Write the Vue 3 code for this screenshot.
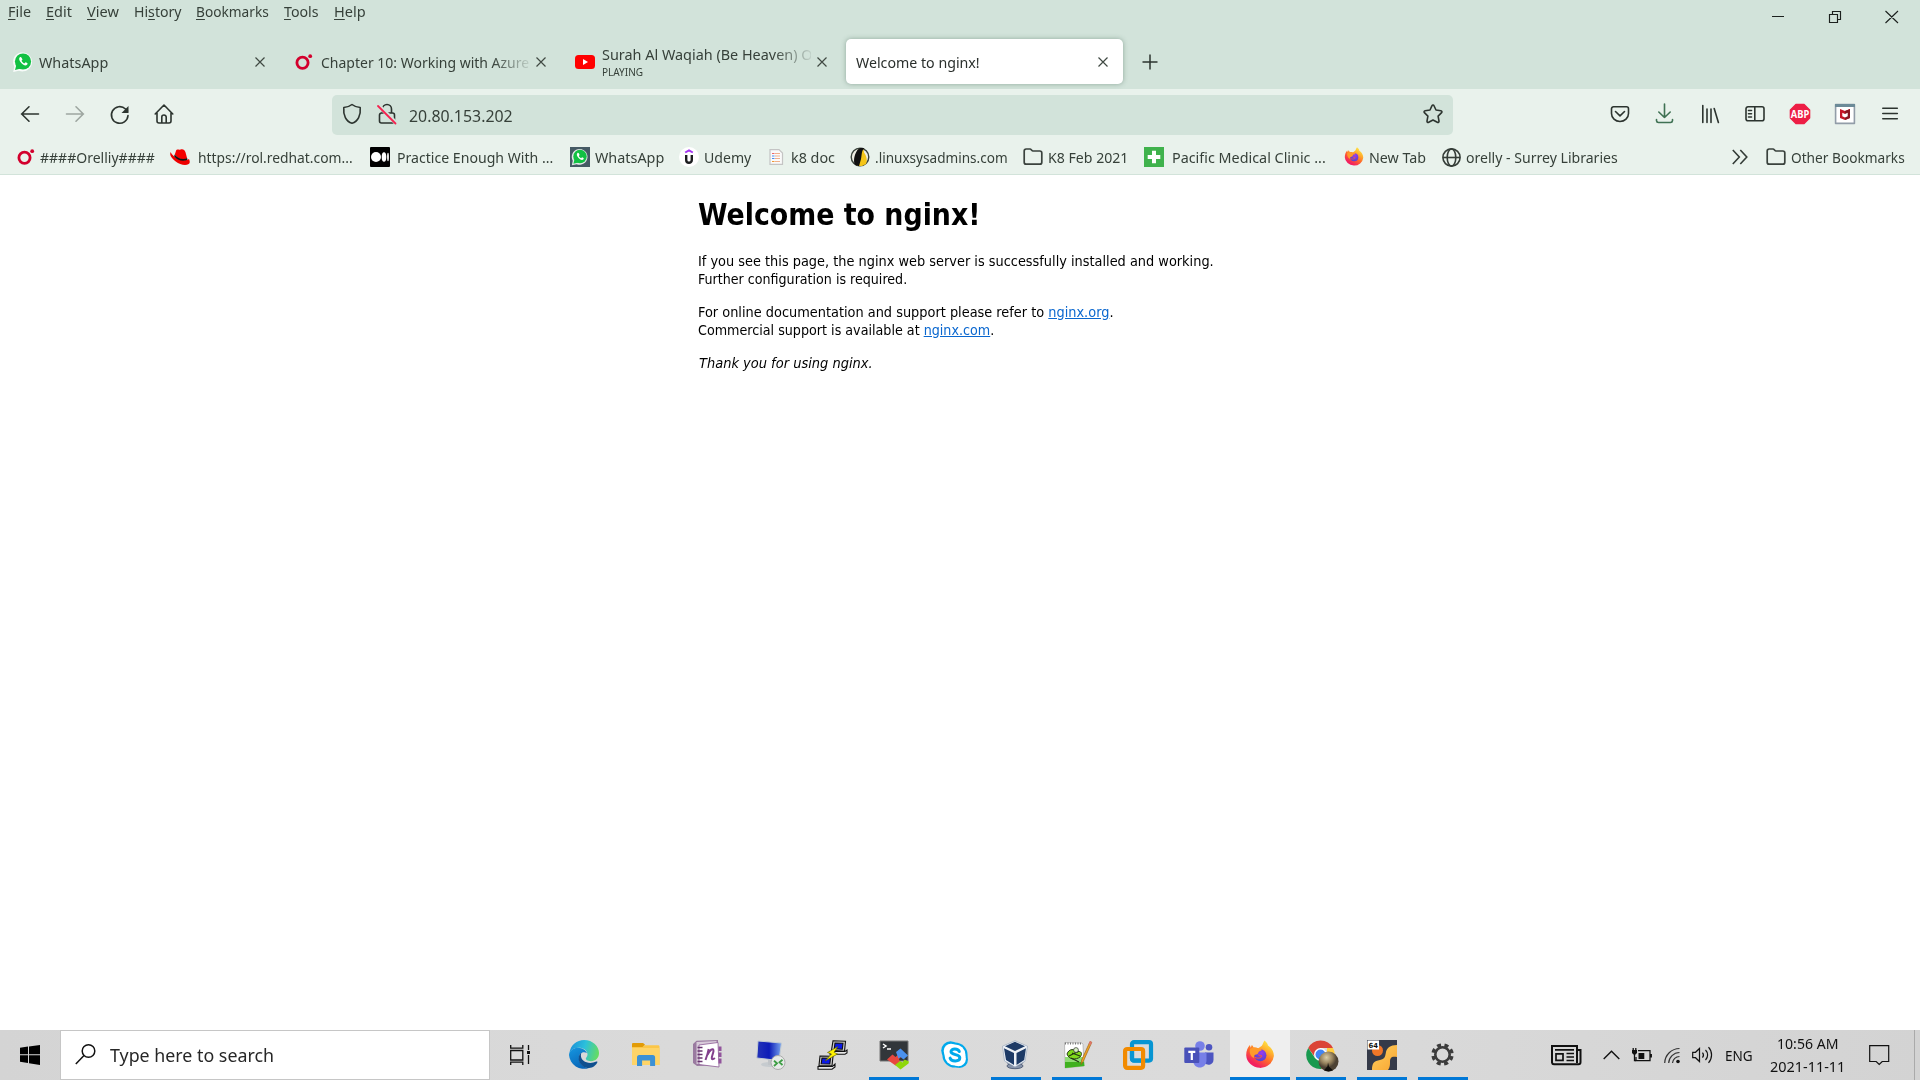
<script setup>
const fit = (el, { value }) => {
  const natural = el.offsetWidth
  if (!natural || !value) return
  el.style.transform = `scaleX(${value / natural})`
  el.style.marginRight = `${value - natural}px`
}
const vFit = { mounted: fit }

const orly = '<circle cx="8.5" cy="10.800" r="5.600" fill="none" stroke="#d3002d" stroke-width="2.800"/><circle cx="16.2" cy="4.2" r="1.9" fill="#d3002d"/>'
const wa = '<path d="M.2 20 1.300 14.600A9.500 9.500 0 1 1 6 18.700Z" fill="#fff" opacity=".85"/><circle cx="10" cy="9.500" r="8.100" fill="#12c143"/><path d="M2 18 3.500 12.500l4.500 4Z" fill="#12c143"/><path d="M7 5.100c-1.600 1.400-.8 3.600 1.300 6 2.200 2.300 4.500 3.200 5.900 1.500.8-1 .4-1.400-1.700-2.300l-1.200 1.200c-1.200-.5-2.300-1.600-2.800-2.700l1-1.200c-.8-1.900-1.300-2.900-2.500-2.500Z" fill="#fff"/>'
const folder = '<path d="M1.200 4a2 2 0 0 1 2-2h3.800c1.300 0 1.700 2 3 2h6.800a2 2 0 0 1 2 2v9.200a2 2 0 0 1-2 2H3.200a2 2 0 0 1-2-2Z" fill="none" stroke="#3a423d" stroke-width="1.700"/>'
const fox = '<defs><linearGradient id="fg" x1=".85" y1="0" x2=".2" y2="1"><stop offset="0" stop-color="#fff44f"/><stop offset=".3" stop-color="#ffb22e"/><stop offset=".55" stop-color="#ff6a2b"/><stop offset=".85" stop-color="#f2205f"/></linearGradient><radialGradient id="fp" cx=".6" cy=".3" r=".8"><stop offset="0" stop-color="#9a3af0"/><stop offset="1" stop-color="#4a45cc"/></radialGradient></defs><path d="M19.500 .5c2.500 1.900 3.300 3.600 3.500 5 3.600 2.200 5.900 6.300 5.900 10.500A13.900 13.300 0 0 1 1.200 15.300c0-4.500 1.500-8 3.700-10.200l.8 2.700 1.100-2.800c.9.600 1.400 1.500 1.700 2.500 1.900-.2 3.300 0 4.800.7 2.300-1.500 3-1.800 4-3.200.7-1.400 1-2.700 2.200-4.500Z" fill="url(#fg)"/><circle cx="15.400" cy="15.200" r="6" fill="url(#fp)"/><path d="M5 8.800c3-2 6-1.500 8.500-.2 2 .2 3 .6 3.300 1.500-.5 1-2.500 1-3 1.700-.7 1-.4 2.300-2.500 2.700-2 .3-2.800 1.200-2.100 3.500-3.500-1-5.200-5-4.200-9.200Z" fill="#ff9a2a"/><path d="M10 17.300c3 1.800 6.200.5 7-1.200-1.500-.2-2.800-.8-3.800-1.500" fill="none" stroke="#ff5a36" stroke-width="1"/>'
const foxSmall = fox.replaceAll('fg', 'fgs').replaceAll('fp', 'fps')

const menus = [
  ['', 'F', 'ile', 23], ['', 'E', 'dit', 26], ['', 'V', 'iew', 32], ['Hi', 's', 'tory', 48],
  ['', 'B', 'ookmarks', 73], ['', 'T', 'ools', 35], ['', 'H', 'elp', 32],
]

const bookmarks = [
  { w: 154, s: 24, t: '####Orelliy####', tw: 115, i: orly },
  { w: 200, s: 28, t: 'https://rol.redhat.com...', tw: 155, i: '<path d="M.5 5C2 8 5 11 10 12.500c4 1 7 .9 9-.5 1 2.500 1.200 4-.3 5-3.500 2-9 .4-13-2.500C2.500 12.200 0 9 .2 6.800Z" fill="#e00"/><path d="M4.800 7.500 6.200 3.200C7 1.800 9 3.300 10.500 2.600c2-.9 4.200 0 5 2.600l1.600 6c-4 2.500-10 .2-12.300-3.700Z" fill="#f40000"/><path d="M4.700 7.600c2.500 3.700 8.500 5.800 12.400 3.500l.4 1.600c-4.500 2.500-11 0-13.400-3.500Z" fill="#111"/>' },
  { w: 200, s: 27, t: 'Practice Enough With ...', tw: 156, i: '<rect width="20" height="20" rx="1"/><circle cx="6" cy="10" r="5" fill="#fff"/><ellipse cx="14" cy="10" rx="2.300" ry="4.700" fill="#fff"/><ellipse cx="18" cy="10" rx=".9" ry="4.200" fill="#fff"/>' },
  { w: 109, s: 25, t: 'WhatsApp', tw: 69, i: `<rect width="20" height="20" fill="#455a64"/><g transform="translate(1.700 1.700) scale(.83)">${wa}</g>` },
  { w: 87, s: 25, t: 'Udemy', tw: 47, i: '<circle cx="10" cy="10" r="10" fill="#fff"/><path d="m6.200 5.500 3.800-2.200 3.800 2.200" fill="none" stroke="#a435f0" stroke-width="2"/><path d="M7.200 8v5c0 3.700 5.600 3.700 5.600 0V8" fill="none" stroke="#1c1d1f" stroke-width="2.400"/>' },
  { w: 84, s: 25, t: 'k8 doc', tw: 44, i: '<path d="M4 2.600h9l3.500 3.500v11.300H4Z" fill="#fafafa" stroke="#c4c4c4" stroke-width="1.200"/><path d="M6 6.500h2.500" stroke="#e66"/><path d="M6 9h2.500M6 11.500h2.500" stroke="#4b8df0"/><path d="M6 14.500h2.500" stroke="#e93"/><path d="M9 6.500h5M9 9h5M9 11.500h5M9 14.500h5" stroke="#f0b08c"/>' },
  { w: 173, s: 25, t: '.linuxsysadmins.com', tw: 133, i: '<circle cx="10" cy="10" r="8.800" fill="#eeeee4" stroke="#38413a" stroke-width="1.400"/><path d="M8.500 2.500c4-2 5.500-.5 5.500 3 3 4 3.500 8.500 2 11.500l-4 2H7.500C4.500 15 6 7 8.500 2.500Z" fill="#f5c518"/><path d="M6.500 4.500C8 .8 12.500-.3 14.500 1.500 11.500 3 12 7 11 12L9 19.300 5 18C3 14 4.500 8 6.500 4.500Z" fill="#111"/>' },
  { w: 121, s: 25, t: 'K8 Feb 2021', tw: 80, i: folder },
  { w: 200, s: 28, t: 'Pacific Medical Clinic ...', tw: 154, i: '<rect width="20" height="20" fill="#3fb24c"/><path d="M10 3.700v12.600M3.700 10h12.600" stroke="#fff" stroke-width="4"/>' },
  { w: 98, s: 25, t: 'New Tab', tw: 57, i: `<g transform="scale(.667)">${foxSmall}</g>` },
  { w: 290, s: 24, t: 'orelly - Surrey Libraries', tw: 152, i: '<g fill="none" stroke="#353d38" stroke-width="1.600"><circle cx="9.500" cy="10.500" r="8.600"/><ellipse cx="9.500" cy="10.500" rx="4.300" ry="8.600"/><path d="M1 10.500h17"/></g>' },
]

const apps = [
  { w: 62, i: '<defs><linearGradient id="e1" x1="0" y1=".3" x2="1" y2=".5"><stop offset="0" stop-color="#1c91d8"/><stop offset=".5" stop-color="#2bc0dc"/><stop offset="1" stop-color="#65dc62"/></linearGradient><linearGradient id="e2" x1="0" y1="0" x2=".5" y2="1"><stop offset="0" stop-color="#1697e0"/><stop offset="1" stop-color="#0966b8"/></linearGradient></defs><path d="M.4 13C1.500 5 8 0 15 0c9 0 15 6.500 15 13 0 5-3.500 8.200-8 8.200-4 0-5.300-1.600-5.200-2.600 0-.8 1.700-1.600 1.700-4C18.500 10 13.500 7.500 9 7.800 4.500 8 2 10 .4 13Z" fill="url(#e1)"/><path d="M.2 13.500C1.600 10 5 7.700 9 7.800c4.500.2 8.200 2.700 8.900 5.300-3.800-2.300-8.200.3-8 5.200.2 5 4.400 9.500 10 9.700A15 15 0 0 1 0 15Z" fill="url(#e2)"/><path d="M12.500 12.500C6.500 17 10.500 28 20 28c4 0 7-3 8.300-5.500.4-.8-.2-1.200-.9-.9-8 3.600-15.500-.5-15.500-6.100 0-1.200.2-2.200.6-3Z" fill="#10508f"/>' },
  { w: 62, i: '<path d="M1 4.500C1 3.500 1.500 3 2.500 3h8l2 2.200H27c1 0 1.500.5 1.500 1.500V25H1Z" fill="#fbc648"/><path d="M1 4.500C1 3.500 1.500 3 2.500 3h9.500l2 1.500L11.500 7H1Z" fill="#e29b07"/><path d="M1 8h27.500v17H1Z" fill="#fed468"/><path d="M6 26V17.500c0-1.500.8-2.500 2.300-2.500h13.500c1.500 0 2.300 1 2.300 2.500V26h-5v-5.500h-8V26Z" fill="#3c91d5"/>' },
  { w: 63, i: '<path d="M0 4 3.500 .8 25 0v25L4 26 0 23Z" fill="#9a7aa0"/><path d="m3.500 2 20-1v21l-20 2Z" fill="#d8cbd9"/><path d="m6 5 19-2.500 1 24.500L6 24.500Z" fill="#fff" stroke="#8c5a94" stroke-width=".8"/><path d="M25.500 6.500h3v4.500h-3zm0 6h3v4.500h-3zm0 6h3v5h-3z" fill="#92549c"/><path d="M4.500 7.500h5M4.500 11h5M4.500 14.500h5M4.500 18h5M4.500 21.500h5" stroke="#68356f" stroke-width="1.500"/><path d="M12.500 20c1.500-4 2.500-7 3.200-11M14.500 15c2-5 6-8 6-4 0 2-2 5-1.700 7.500.2 1.500 2 .5 3-.6" fill="none" stroke="#83408d" stroke-width="2"/>' },
  { w: 61, i: '<defs><linearGradient id="r"><stop offset="0" stop-color="#2433b8"/><stop offset=".5" stop-color="#0d1cb8"/><stop offset="1" stop-color="#78a4ef"/></linearGradient></defs><ellipse cx="14" cy="24.500" rx="9" ry="2.500" fill="#c6cbcf"/><path d="m12 19 7 1v5h-7Z" fill="#c0c4c8"/><path d="m2 1 23.500 2-2.500 17.500L.8 18Z" fill="url(#r)" stroke="#c3ccd4" stroke-width="1"/><circle cx="22" cy="22.500" r="7" fill="#e7eae8" stroke="#aaa"/><path d="m18 20.800 3 2.500-3 2.700M26.500 19.800l-3 2.500 3 2.700" fill="none" stroke="#3c9d43" stroke-width="1.800"/>' },
  { w: 62, i: '<g stroke="#111" stroke-width="1.100"><path d="m16 .8 12.500.5-1 10-13-1Z" fill="#ccc"/><path d="m18 3 8 .2-.7 6-8-.4Z" fill="#0b19e8"/><path d="M13 11.500h15l2-1.500v3l-2 1.200H13Z" fill="#e8e8e8"/><path d="m3 16 13 .2-1 9.500L2 25.500Z" fill="#ccc"/><path d="m5 18 8.500.2-.7 5.800-8.600-.2Z" fill="#0b19e8"/><path d="M1 26.500h14.500L18 24v3l-3 2.300H1Z" fill="#e8e8e8"/></g><path d="M21 6.500 10.500 12.500l4 1.500L8 21l12.500-7-3.500-1.700Z" fill="#fff200" stroke="#555500" stroke-width=".6"/>' },
  { w: 61, run: 1, i: '<path d="M1 1h28v20H1Z" fill="#32363a" stroke="#777"/><path d="m4 4 3 2-3 2M8 9h4" fill="none" stroke="#fff" stroke-width="1.500"/><path d="m8 19.500 5.500-5 3 2.500 3.500-3 2 3-2 2 1 3-4.500 3.500Z" fill="#e8473f"/><path d="m17 12 4.500-3.500 7.500 7-4.500 4-3-2.500-2 1.500Z" fill="#4b91ee"/><path d="m16 25 5-4 2.500 1.500 2-3 4.500 2-.5 2L21.500 29.500Z" fill="#8fd70b"/>' },
  { w: 61, i: '<circle cx="10.500" cy="10.500" r="9.300" fill="#00a9ec"/><circle cx="19.500" cy="19.500" r="8.500" fill="#00a9ec"/><circle cx="15" cy="15" r="12.600" fill="#00a9ec"/><circle cx="11" cy="11" r="7.300" fill="#fff"/><circle cx="18.500" cy="18.800" r="7.400" fill="#fff"/><circle cx="15" cy="15" r="10.500" fill="#fff"/><path d="M19.300 11.500c-1.200-3.500-8.400-3.300-8.300.2.200 3.900 8.800 2 8.800 6.100 0 4.200-8.600 4.200-9.700.3" fill="none" stroke="#00a9ec" stroke-width="3" stroke-linecap="round"/>' },
  { w: 61, run: 1, i: '<ellipse cx="14" cy="26" rx="8" ry="2.700" fill="#8794ab" stroke="#56627a"/><path d="M6 20c0 7 16 7 16 0" fill="none" stroke="#63718b" stroke-width="2"/><path d="m14 .7 12.500 5.500-2.500 15L14 27 3.500 21 1.500 6.200Z" fill="#eef2f7" stroke="#9ba9bd" stroke-width=".7"/><path d="m14 1.800 10 4.500L14 11 4 6.300ZM3 8.300 13 13v12L5 20ZM25 8.300 15.500 13v12l7.700-5Z" fill="#1d3a66"/>' },
  { w: 61, run: 1, i: '<path d="M2.500 2.500 20 3l1 1 1 22-19 2Z" fill="#fff" stroke="#bbb"/><path d="M3 17h18.500l1 9L3 28Z" fill="#8fdc74"/><path d="M3 22h19l.3 4L3 28Z" fill="#3fb01f"/><path d="M3 3.500h17" stroke="#777" stroke-width="2" stroke-dasharray="1 1.500"/><path d="M5 14c2-6 8-5 10-2 4-2 6 2 3 5-4 3-11 3-13-3Z" fill="#80db1c" stroke="#263b16"/><path d="m7 16 10-5m-8 7 8 4m-7-9 8 3" stroke="#223415" stroke-width="1.200"/><circle cx="14" cy="10" r="2.400" fill="#d8f0c3" stroke="#333" stroke-width=".7"/><path d="m28 1.500 1.800.8L21.500 21l-2.500 3.500.6-4.500Z" fill="#f0a321" stroke="#8e5815" stroke-width=".6"/><path d="m26.500 4 2.500 1 .8-3-1.800-1Z" fill="#de756c"/>' },
  { w: 61, i: '<rect x="9" y="2.100" width="19" height="18.500" rx="2" fill="none" stroke="#0795d2" stroke-width="4.200"/><rect x="2.100" y="9" width="18" height="18.800" rx="2" fill="none" stroke="#f28b00" stroke-width="4.200"/><path d="M9 11.100v7.400a2 2 0 0 0 2 2h7" fill="none" stroke="#0795d2" stroke-width="4.200"/>' },
  { w: 61, i: '<circle cx="25" cy="7.200" r="3.300" fill="#4d55c1"/><path d="M21 12.500h8.500v7c0 6-6.500 6-8.500 4Z" fill="#4d55c1"/><circle cx="16" cy="6" r="4.800" fill="#777fe8"/><path d="M9 12.500h13.500V20c0 10-13.500 10-13.500 0Z" fill="#777fe8"/><rect x=".3" y="7.500" width="15" height="15.500" rx="1" fill="#4951b9"/><path d="M4.300 10.800h7v2.100H8.900v7H6.700v-7H4.300Z" fill="#fff"/>' },
  { w: 61, run: 1, active: 1, i: fox },
  { w: 61, run: 1, i: '<path d="M2.200 8A14 14 0 0 1 27 8H14.500L9 17Z" fill="#db4437"/><path d="M27 8a14 14 0 0 1-12 21l6-12V8Z" fill="#ffcd40"/><path d="M2.200 8A14 14 0 0 0 15 29l4-8-10-3Z" fill="#18994f"/><circle cx="14.500" cy="14.500" r="6.500" fill="#fff"/><circle cx="14.500" cy="14.500" r="5" fill="#4285f4"/><defs><radialGradient id="av" cx=".4" cy=".3"><stop offset="0" stop-color="#dccfa9"/><stop offset=".6" stop-color="#97835e"/><stop offset="1" stop-color="#4d4234"/></radialGradient></defs><circle cx="22.500" cy="21.500" r="10" fill="url(#av)"/><path d="m22 22.500 1 4 4 3.800a10 10 0 0 1-9 0l3.500-4Z" fill="#120f0c"/>' },
  { w: 61, run: 1, i: '<defs><linearGradient id="o" x1="0" y1="0" x2="1" y2="1"><stop offset="0" stop-color="#ffd060"/><stop offset="1" stop-color="#f9a531"/></linearGradient></defs><path d="M0 0h30v30H0Z" fill="#353a49"/><path d="M30 5v12c-6-1-7 1-7 5 0 3 0 5-2 8H5c0-7 2-9 8-10 5-1 5-3 6-8 1-4 4-7 11-7Z" fill="url(#o)"/><circle cx="10.500" cy="10.500" r="5.500" fill="#ef7628"/><path d="M.5.5h11.500v9H.5Z" fill="#fff"/><text x="1.500" y="7.800" font-family="DejaVu Sans" font-size="7" font-weight="bold" textLength="9.500" lengthAdjust="spacingAndGlyphs" fill="#111">64</text>' },
  { w: 61, run: 1, i: '<g fill="none" stroke="#3c3c3c"><circle cx="14.500" cy="14.500" r="9.500" stroke-width="3.400" stroke-dasharray="4 3.461" stroke-dashoffset="-1.700"/><circle cx="14.500" cy="14.500" r="7.200" stroke-width="2.600"/></g>' },
]
</script>

<template>
  <div class="screen">
    <header class="titlebar">
      <nav class="menus">
        <span v-for="m in menus" :key="m[2]" class="menu" v-fit="m[3]">{{ m[0] }}<u>{{ m[1] }}</u>{{ m[2] }}</span>
      </nav>
      <svg class="winctl" width="126" height="20" viewBox="0 0 126 20" fill="none" stroke="#1c211e" stroke-width="1.150"><path d="M0 9.500h12M57.500 7.500h8v8h-8zM60.500 7.500v-3h8v8h-3M113.500 4l12.500 12M126 4l-12.500 12"/></svg>
    </header>

    <div class="tabs">
      <div class="tab">
        <svg class="fav" width="20" height="20" viewBox="0 0 20 20" v-html="wa"></svg>
        <div class="label"><span v-fit="69">WhatsApp</span></div>
        <svg class="close" viewBox="0 0 10 10"><path d="m.5.5 9 9m0-9-9 9" /></svg>
      </div>
      <div class="tab">
        <svg class="fav" width="20" height="20" viewBox="0 0 20 20" v-html="orly"></svg>
        <div class="label fade"><span v-fit="208">Chapter 10: Working with Azure</span></div>
        <svg class="close" viewBox="0 0 10 10"><path d="m.5.5 9 9m0-9-9 9" /></svg>
      </div>
      <div class="tab">
        <svg class="fav" width="20" height="20" viewBox="0 0 20 20"><rect y="3" width="20" height="14" rx="3.500" fill="#f00" /><path d="m8 7 5 3-5 3Z" fill="#fff" /></svg>
        <div class="label fade two"><span v-fit="219">Surah Al Waqiah (Be Heaven) On</span><small v-fit="41">PLAYING</small></div>
        <svg class="close" viewBox="0 0 10 10"><path d="m.5.5 9 9m0-9-9 9" /></svg>
      </div>
      <div class="tab current">
        <div class="label"><span v-fit="124">Welcome to nginx!</span></div>
        <svg class="close" viewBox="0 0 10 10"><path d="m.5.5 9 9m0-9-9 9" /></svg>
      </div>
      <svg class="plus" width="16" height="16" viewBox="0 0 16 16" stroke="#2c342f" stroke-width="1.500"><path d="M8 .5v15M.5 8h15" /></svg>
    </div>

    <div class="toolbar">
      <div class="nav">
        <svg width="20" height="20" viewBox="0 0 20 20"><path d="M18.500 10H1.500M9 2.800 1.700 10 9 17.200" /></svg>
        <svg width="20" height="20" viewBox="0 0 20 20" opacity=".4"><path d="M1.500 10h17M11 2.800l7.300 7.200-7.300 7.200" /></svg>
        <svg width="20" height="20" viewBox="0 0 20 20"><path d="M19 11.500A8.300 8.300 0 1 1 16.500 5l2 2" /><path d="M19.500 2v7H12.500Z" fill="#2c342f" stroke="none" /></svg>
        <svg width="20" height="20" viewBox="0 0 20 20"><path d="M1.200 10 10 1l8.800 9M3 8.800V17a2 2 0 0 0 2 2h10a2 2 0 0 0 2-2V8.800M7.800 19v-6a2.200 2 0 0 1 4.400 0v6" /></svg>
      </div>
      <div class="url">
        <svg width="20" height="20" viewBox="0 0 20 20"><path d="M10 .5C7.500 2.500 5 3.300 1.800 3.500 1 11 4 17.500 10 19.200c6-1.700 9-8.200 8.200-15.700C15 3.300 12.500 2.500 10 .5Z" /></svg>
        <svg width="20" height="20" viewBox="0 0 20 20"><path d="M5.500 8.500V5a4.500 4.500 0 0 1 9 0v3.500M4.500 9h11a2 2 0 0 1 2 2v6a2 2 0 0 1-2 2h-11a2 2 0 0 1-2-2v-6a2 2 0 0 1 2-2Z" /><path d="m2.500 2.500 17 17" stroke="#d2e3da" stroke-width="4" /><path d="m1 2 17.500 17.500" stroke="#f5214f" stroke-width="1.800" /></svg>
        <span v-fit="104">20.80.153.202</span>
        <svg class="star" width="20" height="20" viewBox="0 0 20 20"><path d="M9 1.700c.4-.9 1.600-.9 2 0l2 4.300 4.900.7c1 .2 1.400 1.200.7 1.900l-3.500 3.500.9 5c.2 1-.8 1.700-1.700 1.200L10 16l-4.300 2.300c-.9.500-1.900-.2-1.700-1.200l.9-5L1.400 8.600c-.7-.7-.3-1.700.7-1.900L7 6Z" /></svg>
      </div>
      <div class="actions">
        <svg width="20" height="20" viewBox="0 0 20 20"><path d="M3.500 2.800h13a2 2 0 0 1 2 2v4.700a8.500 8 0 0 1-17 0V4.800a2 2 0 0 1 2-2ZM5.500 7.500 10 11.800l4.500-4.300" /></svg>
        <svg width="20" height="20" viewBox="0 0 20 20" class="green"><path d="M9.500 0v13.500M3.800 8 9.500 13.500 15.200 8M1.500 15.500v1.200a2 2 0 0 0 2 1.800h12a2 2 0 0 0 2-1.800v-1.200" /></svg>
        <svg width="20" height="20" viewBox="0 0 20 20"><path d="M2.800 1.500v17M7 5v13.500M11 5v13.500M14.200 4.500l4.200 14" /></svg>
        <svg width="20" height="20" viewBox="0 0 20 20"><path d="M3 2.800h14a2 2 0 0 1 2 2v10a2 2 0 0 1-2 2H3a2 2 0 0 1-2-2v-10a2 2 0 0 1 2-2Zm6.800 0v14M3.500 6.500h3M3.500 9.800h3M3.500 13h3" /></svg>
        <svg width="20" height="20" viewBox="0 0 20 20"><path d="M6 .5h8L19.500 6v8L14 19.500H6L.5 14V6Z" fill="#ed1e45" stroke="#ed1e45" /><text x=".8" y="13.800" font-family="Open Sans" font-size="10.500" font-weight="bold" textLength="18.500" lengthAdjust="spacingAndGlyphs" fill="#fff" stroke="none">ABP</text></svg>
        <svg width="20" height="20" viewBox="0 0 20 20"><path d="M.6.6h18.800v18.800H.6Z" fill="#fff" stroke="#929da8" /><path d="M0 0h20v3H0Z" fill="#6c8b98" stroke="none" /><path d="m5 5 5 2 5-2v9l-5 2-5-2Z" fill="#c41526" stroke="none" /><path d="m10 7 5-2v9l-5 2Z" fill="#881722" stroke="none" /><path d="m7.300 8.700 2.700 1.200 2.700-1.200v3.600L10 13.500l-2.700-1.200Z" fill="#fff" stroke="none" /></svg>
        <svg width="20" height="20" viewBox="0 0 20 20"><path d="M2.800 4.200h14.500M2.800 9.500h14.500M2.800 14.800h14.500" /></svg>
      </div>
    </div>

    <div class="bookmarks">
      <div v-for="b in bookmarks" :key="b.t" class="bm" :style="{ width: b.w + 'px' }">
        <span class="slot" :style="{ width: b.s + 'px' }"><svg width="20" height="20" viewBox="0 0 20 20" v-html="b.i"></svg></span>
        <span v-fit="b.tw">{{ b.t }}</span>
      </div>
      <svg class="more" width="16" height="16" viewBox="0 0 16 16" fill="none" stroke="#333b36" stroke-width="1.600"><path d="m.8 1 6.500 7-6.500 7M8.300 1l6.500 7-6.500 7" /></svg>
      <svg class="ofolder" width="20" height="20" viewBox="0 0 20 20" v-html="folder"></svg>
      <span v-fit="114">Other Bookmarks</span>
    </div>

    <main class="page">
      <article>
        <h1><span v-fit="282">Welcome to nginx!</span></h1>
        <p><span v-fit="515.5">If you see this page, the nginx web server is successfully installed and working.</span><br><span v-fit="209.5">Further configuration is required.</span></p>
        <p><span v-fit="415.5">For online documentation and support please refer to <a>nginx.org</a>.</span><br><span v-fit="296.5">Commercial support is available at <a>nginx.com</a>.</span></p>
        <p><em v-fit="174">Thank you for using nginx.</em></p>
      </article>
    </main>

    <footer class="taskbar">
      <div class="start"><svg width="20" height="20" viewBox="0 0 20 20"><path d="M0 2.800 8 1.600v7.600H0Zm9-1.300L20 0v9.200H9ZM0 10.200h8V18l-8-1.200Zm9 0h11V20L9 18.300Z" /></svg></div>
      <div class="search">
        <svg width="21" height="21" viewBox="0 0 21 21" fill="none" stroke="#111" stroke-width="1.500"><circle cx="13.500" cy="7" r="6.300" /><path d="M9 11.500.8 20" /></svg>
        <span v-fit="164">Type here to search</span>
      </div>
      <svg class="taskview" width="21" height="20" viewBox="0 0 21 20" fill="none" stroke="#111" stroke-width="1.300"><path d="M.7 0v3.200h12.100V0M.7 5.500h12.100v9.500H.7ZM.7 20v-2.800h12.100V20M18.500 0v5M18.500 10v9" /><path d="M17 6h3v3h-3Z" fill="#111" stroke="none" /></svg>
      <div class="apps">
        <div v-for="(a, n) in apps" :key="n" class="app" :class="{ run: a.run, active: a.active }" :style="{ width: a.w + 'px' }">
          <svg width="30" height="30" viewBox="0 0 30 30" v-html="a.i"></svg>
        </div>
      </div>
      <div class="tray">
        <svg class="news" width="31" height="21" viewBox="0 0 31 21" fill="none" stroke="#111" stroke-width="2"><path d="M26 18V1H1v16.500A2 2 0 0 0 3 19.200h24.500a2 2 0 0 0 2-2V5H26" /><path d="M4 4.800h19M15.500 8.500H23M15.500 12H23M15.500 15.500H23M5 8.800h7v6.500H5Z" stroke-width="1.700" /></svg>
        <svg class="up" width="17" height="10" viewBox="0 0 17 10" fill="none" stroke="#111" stroke-width="1.400"><path d="m.7 9 7.800-7.800L16.300 9" /></svg>
        <svg class="bat" width="20" height="15" viewBox="0 0 20 15" fill="none" stroke="#111" stroke-width="1.300"><path d="M6 2.700h12v10H4V9M19.300 6v3.500" /><path d="M6.500 5h5.800v6H6.500ZM0 2h5v3L3.500 6.500h-2L0 5Z" fill="#111" stroke="none" /><path d="M1.200 0v2M3.800 0v2M2.500 6v6.500H4" /></svg>
        <svg class="wifi" width="17" height="17" viewBox="0 0 17 17" fill="none" stroke="#333" stroke-width="1.200"><path d="M.7 16A15 15 0 0 1 15.500 1.500M4.700 16A11 11 0 0 1 15.500 5.500M8.500 16a7 7 0 0 1 7-6.500" /><circle cx="14" cy="14.500" r="1.800" fill="#111" stroke="none" /></svg>
        <svg class="vol" width="21" height="18" viewBox="0 0 21 18" fill="none" stroke="#111" stroke-width="1.200"><path d="M.7 6.300h2.800L7.500 2.500v13L3.500 11.700H.7ZM10.500 6.500a4 4 0 0 1 0 5M13.500 4a7 7 0 0 1 0 10M16.500 1.200a11.500 11.500 0 0 1 0 15.600" /></svg>
        <span class="lang"><span v-fit="28">ENG</span></span>
        <div class="clock"><div><span v-fit="61">10:56 AM</span></div><div><span v-fit="75">2021-11-11</span></div></div>
        <svg class="note" width="21" height="21" viewBox="0 0 21 21" fill="none" stroke="#111" stroke-width="1.200"><path d="M.7.700h19v15.800h-6.500l-3 3-3-3H.7Z" /></svg>
        <i class="peek"></i>
      </div>
    </footer>
  </div>
</template>

<style>
body { overflow: hidden; }
</style>

<style scoped>
.screen { width: 1920px; height: 1080px; display: flex; flex-direction: column; background: #fff; font-family: "Noto Sans", "Open Sans", sans-serif; font-size: 15px; color: #364039; overflow: hidden; }
.screen svg { display: block; flex: none; overflow: visible; }
span, small, em { display: inline-block; white-space: pre; transform-origin: 0 50%; flex: none; }
.titlebar { height: 34px; background: #d2e3da; display: flex; justify-content: space-between; }
.menus { display: flex; padding-left: 8px; gap: 15px; line-height: 23px; height: 23px; }
.menus u { text-underline-offset: 2px; text-decoration-thickness: 1px; }
.winctl { margin: 7px 22px 0 0; }
.tabs { height: 55px; background: #d2e3da; display: flex; align-items: flex-start; padding-left: 3px; }
.tab { width: 277px; height: 45px; margin: 5px 4px 0 0; padding: 0 15.500px 0 10px; box-sizing: border-box; display: flex; align-items: center; border-radius: 5px; }
.tab .fav { margin-right: 6px; }
.tab:nth-child(2) .fav { margin-right: 7px; }
.tab:nth-child(3) .fav { margin-right: 7px; }
.tab.current { background: #fff; box-shadow: 0 0 5px rgba(60, 95, 78, .45); color: #2a2f2c; }
.label { flex: 1; min-width: 0; overflow: hidden; line-height: 47px; height: 45px; }
.fade { -webkit-mask-image: linear-gradient(90deg, #000 calc(100% - 38px), transparent calc(100% + 4px)); mask-image: linear-gradient(90deg, #000 calc(100% - 38px), transparent calc(100% + 4px)); }
.two { display: flex; flex-direction: column; align-items: flex-start; line-height: normal; }
.two span { line-height: 20px; margin-top: 5px; }
.two small { font-size: 11px; line-height: 12px; margin-top: 2px; }
.close { width: 10px; height: 10px; margin-left: 6px; fill: none; stroke: #404943; stroke-width: 1.2; }
.plus { margin: 20px 0 0 14.500px; }
.toolbar { height: 51px; background: #e9f2ec; display: flex; align-items: center; }
.toolbar svg { fill: none; stroke: #2c342f; stroke-width: 1.6; stroke-linecap: round; stroke-linejoin: round; }
.nav { display: flex; gap: 24.7px; padding-left: 20px; width: 312px; }
.url { width: 1121px; height: 40px; border-radius: 5px; background: #d2e3da; display: flex; align-items: center; padding: 0 10px; box-sizing: border-box; font-size: 16.5px; gap: 15px; }
.url span { margin-left: -3px; line-height: 43px; padding-top: 1px; }
.url .star { margin-left: auto; }
.nav svg, .url svg, .actions svg { margin-bottom: 1px; }
.actions { display: flex; gap: 25px; margin-left: 157px; }
.actions .green { stroke: #3f7153; }
.bookmarks { height: 34px; background: #e9f2ec; border-bottom: 1px solid #d2e3da; display: flex; align-items: center; padding-left: 16px; }
.bm { display: flex; align-items: center; flex: none; }
.slot { line-height: 0; }
.more { margin-right: 18px; }
.ofolder { margin-right: 5px; }
.page { flex: 1; }
article { width: 525px; margin: 0 auto; padding-top: 21px; font-family: "DejaVu Sans Condensed", "DejaVu Sans", sans-serif; font-stretch: condensed; font-size: 14.8px; line-height: 18px; color: #000; }
h1 { margin: 0; font-size: 29.500px; line-height: 38px; }
p { margin: 15px 0 0; }
h1 + p { margin-top: 18px; }
a { color: #0a67cf; text-decoration: underline; }
em { margin-left: 1px; }
.taskbar { height: 50px; display: flex; background: linear-gradient(90deg, #d4d4d4, #dadada 35%, #dbdbdb 65%, #d3d3d3); color: #111; }
.start { width: 60px; display: flex; align-items: center; padding-left: 20px; box-sizing: border-box; }
.search { width: 430px; box-sizing: border-box; border: 1px solid #c6c6c6; background: #fff; display: flex; align-items: center; padding-left: 14px; font-size: 18.700px; gap: 14px; color: #272727; }
.search span { padding-bottom: 2px; }
.search svg { margin-bottom: 1px; }
.taskview { margin: 15px 0 0 20px; }
.apps { display: flex; margin-left: 23px; }
.app { flex: none; padding-top: 10px; box-sizing: border-box; display: flex; flex-direction: column; align-items: flex-start; padding-left: 15px; }
.app.run::after { content: ""; width: 50px; height: 3px; background: #0078d7; margin: 7px 0 0 -10px; }
.app.active { background: linear-gradient(#efefef, #efefef) 0 0 / 60px 100% no-repeat; }
.app.active::after { width: 60px; margin-left: -15px; }
.tray { display: flex; align-items: center; margin-left: auto; }
.up { margin-left: 21px; }
.bat { margin-left: 12px; }
.wifi { margin-left: 12px; }
.vol { margin-left: 11px; }
.lang { margin-left: 12px; line-height: 50px; }
.clock { width: 75px; margin-left: 17px; text-align: center; line-height: 23px; margin-bottom: 1px; }
.clock div { display: flex; justify-content: center; }
.note { margin-left: 24px; }
.peek { width: 5px; height: 50px; border-left: 1px solid #aaa; margin-left: 24px; }
</style>
